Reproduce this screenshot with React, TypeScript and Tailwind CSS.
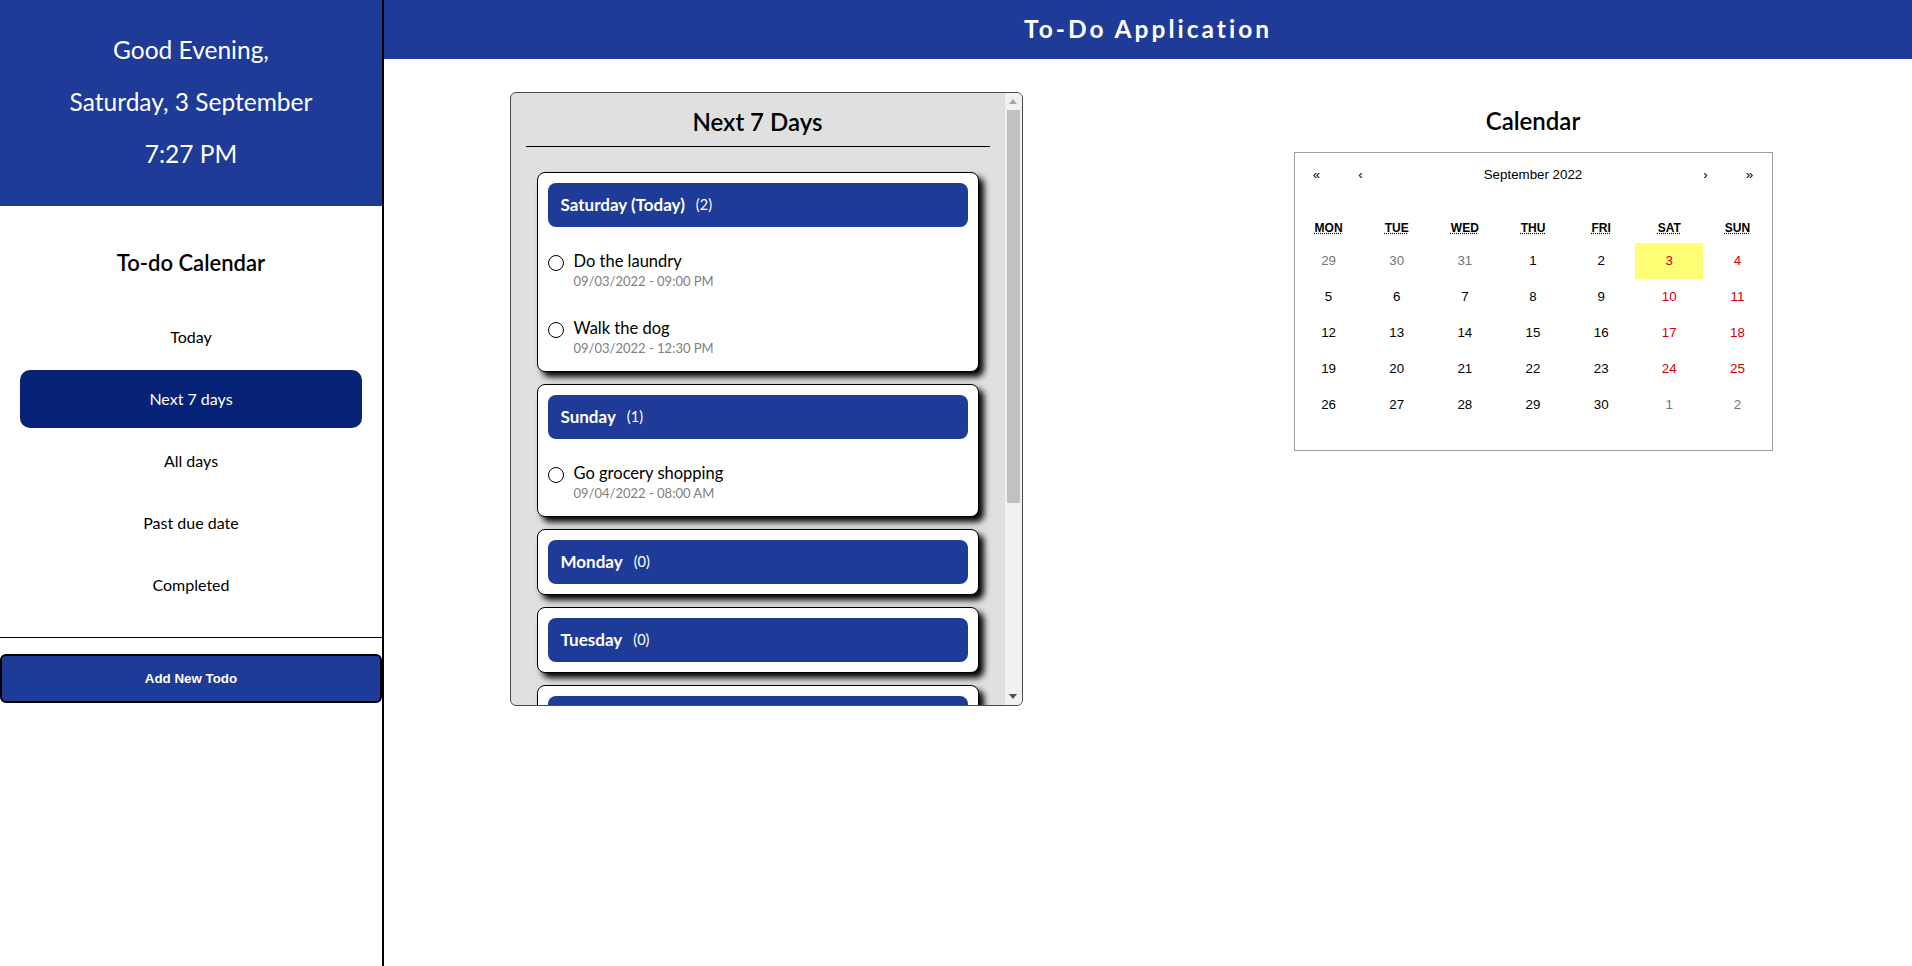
import React from 'react';

type Todo = { title: string; due: string };
type Day = { name: string; todos: Todo[] };

const days: Day[] = [
    {
        name: 'Saturday (Today)',
        todos: [
            { title: 'Do the laundry', due: '09/03/2022 - 09:00 PM' },
            { title: 'Walk the dog', due: '09/03/2022 - 12:30 PM' },
        ],
    },
    { name: 'Sunday', todos: [{ title: 'Go grocery shopping', due: '09/04/2022 - 08:00 AM' }] },
    { name: 'Monday', todos: [] },
    { name: 'Tuesday', todos: [] },
    { name: 'Wednesday', todos: [] },
    { name: 'Thursday', todos: [] },
    { name: 'Friday', todos: [] },
];

const navItems = ['Today', 'Next 7 days', 'All days', 'Past due date', 'Completed'];

const weekdays = [
    ['Mon', 'Monday'],
    ['Tue', 'Tuesday'],
    ['Wed', 'Wednesday'],
    ['Thu', 'Thursday'],
    ['Fri', 'Friday'],
    ['Sat', 'Saturday'],
    ['Sun', 'Sunday'],
];

// 5 weeks shown for September 2022, monday first
const calendarDays: { day: number; outside: boolean }[] = [
    ...[29, 30, 31].map((d) => ({ day: d, outside: true })),
    ...Array.from({ length: 30 }, (_, i) => ({ day: i + 1, outside: false })),
    ...[1, 2].map((d) => ({ day: d, outside: true })),
];

const Sidebar: React.FC = () => (
    <aside className="w-[384px] shrink-0 border-r-2 border-black flex flex-col">
        <div className="h-[206px] bg-[#1f3b98] text-white text-[24.5px] leading-[52px] pt-[24px] flex flex-col items-center">
            <span>Good Evening,</span>
            <span>Saturday, 3 September</span>
            <span>7:27 PM</span>
        </div>

        <h2 className="mt-[42px] text-center text-[22px] leading-[30px] font-semibold text-black">To-do Calendar</h2>

        <nav className="mt-[30px] mx-[20px] flex flex-col gap-[4px]">
            {navItems.map((item) => (
                <div
                    key={item}
                    className={
                        item === 'Next 7 days'
                            ? 'h-[58px] rounded-[10px] bg-[#062276] text-white flex items-center justify-center text-[16px]'
                            : 'h-[58px] flex items-center justify-center text-[16px] text-black'
                    }
                >
                    {item}
                </div>
            ))}
        </nav>

        <div className="mt-[23px] border-t border-black" />

        <button className="mt-[16px] h-[49px] w-full rounded-[6px] border-2 border-black bg-[#1f3b98] text-white font-bold text-[13.33px] font-['Liberation_Sans',Arial,sans-serif]">
            Add New Todo
        </button>
    </aside>
);

const DayCard: React.FC<{ day: Day }> = ({ day }) => (
    <div className="w-[442px] mx-auto rounded-[8px] border border-black bg-white p-[10px] shadow-[5px_5px_6px_#000]">
        <div className="h-[44px] rounded-[8px] bg-[#1f3b98] px-[13px] flex items-center gap-[11px] text-white">
            <span className="font-bold text-[17px]">{day.name}</span>
            <span className="text-[14.5px]">({day.todos.length})</span>
        </div>
        {day.todos.map((todo) => (
            <div key={todo.title} className="flex items-start gap-[10px] pt-[24px] pb-[5px]">
                <span className="mt-[4px] h-[16px] w-[16px] shrink-0 rounded-full border-[1.5px] border-black" />
                <div className="flex flex-col">
                    <span className="text-[16.5px] leading-[20px] text-black">{todo.title}</span>
                    <span className="mt-[2px] text-[13px] leading-[16px] text-[#808080]">{todo.due}</span>
                </div>
            </div>
        ))}
    </div>
);

// the browser hides real scrollbars, so the classic one is drawn beside the list
const ScrollBar: React.FC = () => (
    <div className="w-[17px] shrink-0 bg-[#f1f1f1] flex flex-col">
        <div className="h-[17px] flex items-center justify-center">
            <svg width="8" height="5" viewBox="0 0 8 5">
                <polygon points="0,5 8,5 4,0" fill="#a3a3a3" />
            </svg>
        </div>
        <div className="flex-1 px-[2px]">
            <div className="h-[393px] bg-[#c1c1c1]" />
        </div>
        <div className="h-[17px] flex items-center justify-center">
            <svg width="8" height="5" viewBox="0 0 8 5">
                <polygon points="0,0 8,0 4,5" fill="#505050" />
            </svg>
        </div>
    </div>
);

const NextSevenDays: React.FC = () => (
    <div className="mt-[33px] w-[513px] h-[614px] rounded-[6px] border border-[#4a4a4a] bg-[#e0e0e0] overflow-hidden flex">
        <div className="flex-1 overflow-y-auto [scrollbar-width:none]">
            <h2 className="pt-[13px] text-center text-[24px] leading-[32px] font-semibold text-black">Next 7 Days</h2>
            <div className="mt-[8px] mx-[15px] border-b border-black" />
            <div className="mt-[25px] pb-[20px] flex flex-col gap-[12px]">
                {days.map((d) => (
                    <DayCard key={d.name} day={d} />
                ))}
            </div>
        </div>
        <ScrollBar />
    </div>
);

const Calendar: React.FC = () => (
    <div className="flex flex-col items-center pl-[6px]">
        <h2 className="mt-[46px] text-center text-[24px] leading-[32px] font-semibold text-black">Calendar</h2>
        <div className="mt-[15px] w-[479px] border border-[#a0a096] bg-white pb-[27px] font-['Liberation_Sans',Arial,sans-serif]">
            <div className="h-[44px] mb-[16px] flex text-[13.33px] text-black">
                <button className="min-w-[44px]">«</button>
                <button className="min-w-[44px]">‹</button>
                <button className="flex-1">September 2022</button>
                <button className="min-w-[44px]">›</button>
                <button className="min-w-[44px]">»</button>
            </div>
            <div className="grid grid-cols-7 text-center text-[12px] font-bold uppercase">
                {weekdays.map(([abbr, full]) => (
                    <div key={abbr} className="p-[8px] leading-[14px]">
                        <abbr title={full} className="underline decoration-dotted">
                            {abbr}
                        </abbr>
                    </div>
                ))}
            </div>
            <div className="grid grid-cols-7 text-[13.33px]">
                {calendarDays.map((c, i) => {
                    const weekend = i % 7 >= 5;
                    const today = !c.outside && c.day === 3;
                    let color = 'text-black';
                    if (c.outside) color = 'text-[#757575]';
                    else if (weekend) color = 'text-[#d10000]';
                    return (
                        <button
                            key={i}
                            className={`h-[36px] flex items-center justify-center ${color} ${today ? 'bg-[#ffff76]' : ''}`}
                        >
                            {c.day}
                        </button>
                    );
                })}
            </div>
        </div>
    </div>
);

export default function App() {
    return (
        <div className="flex h-[966px] w-full bg-white font-['Lato',sans-serif] overflow-hidden">
            <Sidebar />
            <main className="flex-1 flex flex-col">
                <header className="h-[59px] bg-[#1f3b98] flex items-center justify-center">
                    <h1 className="text-white text-[24.5px] font-bold tracking-[3px]">To-Do Application</h1>
                </header>
                <div className="grid grid-cols-2">
                    <div className="flex justify-center">
                        <NextSevenDays />
                    </div>
                    <Calendar />
                </div>
            </main>
        </div>
    );
}
